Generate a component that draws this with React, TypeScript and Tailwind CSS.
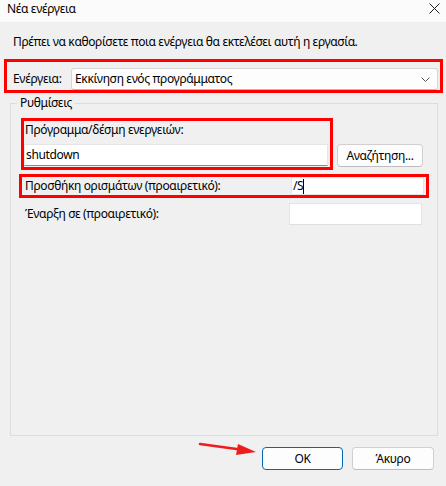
import React from "react";

const font = { fontFamily: '"Noto Sans", "Liberation Sans", sans-serif' };

function TextBox({ value, cursor, className }: { value?: string; cursor?: boolean; className?: string }) {
  return (
    <div
      className={
        "flex items-center bg-white border border-[#e5e5e5] border-b-[#8a8a8a] pl-[1px] text-[12px] leading-[16px] text-black " +
        (className ?? "")
      }
    >
      {value}
      {cursor && <span className="inline-block w-px h-[15px] bg-black" />}
    </div>
  );
}

export default function App() {
  return (
    <div className="relative w-[446px] h-[486px] bg-[#f0f0f0] text-black overflow-hidden tracking-[-0.35px]" style={font}>
      {/* title bar */}
      <div className="flex items-center justify-between h-[22px] bg-[#fbfbfb] pl-[7px] pr-[6px]">
        <span className="text-[12px] leading-[16px] -mt-[4px]">Νέα ενέργεια</span>
        <svg width="11" height="11" viewBox="0 0 11 11" className="-mt-[6px]">
          <path d="M0.5 0.5 L10.5 10.5 M10.5 0.5 L0.5 10.5" stroke="#1a1a1a" strokeWidth="1" />
        </svg>
      </div>

      <p className="mt-[12px] pl-[13px] text-[12px] leading-[16px]">
        Πρέπει να καθορίσετε ποια ενέργεια θα εκτελέσει αυτή η εργασία.
      </p>

      {/* action select */}
      <div className="mt-[9px] ml-[4px] w-[439px] h-[34px] border-[3px] border-[#ff0000] flex items-end pl-[6px] pr-[2px]">
        <span className="text-[12px] leading-[16px] mb-[3px] w-[58px]">Ενέργεια:</span>
        <div className="flex-1 h-[22px] flex items-center justify-between bg-[#fdfdfd] border border-[#d6d6d6] border-b-[#b8b8b8] rounded-[3px] pl-[3px] pr-[7px]">
          <span className="text-[12px] leading-[16px]">Εκκίνηση ενός προγράμματος</span>
          <svg width="9" height="5" viewBox="0 0 9 5">
            <path d="M0.5 0.5 L4.5 4.5 L8.5 0.5" stroke="#555" strokeWidth="1" fill="none" />
          </svg>
        </div>
      </div>

      {/* settings group */}
      <fieldset className="mt-[2px] ml-[10px] w-[428px] h-[341px] border border-[#dcdcdc]">
        <legend className="ml-[6px] px-[3px] text-[12px] leading-[16px]">Ρυθμίσεις</legend>

        <div className="flex items-end mt-[7px] ml-[10px]">
          <div className="w-[312px] h-[52px] border-[3px] border-[#ff0000] flex flex-col pr-[2px] pb-[1px]">
            <span className="text-[12px] leading-[16px] mt-[1px] pl-[1px]">Πρόγραμμα/δέσμη ενεργειών:</span>
            <TextBox value="shutdown" className="mt-auto h-[22px]" />
          </div>
          <button className="ml-[4px] mb-[3px] w-[86px] h-[23px] rounded-[4px] bg-[#fdfdfd] border border-[#d0d0d0] border-b-[#bdbdbd] text-[12px] leading-[16px]">
            Αναζήτηση...
          </button>
        </div>

        <div className="mt-[4px] ml-[8px] w-[410px] h-[24px] border-[3px] border-[#ff0000] flex items-center pl-[3px] pr-[2px]">
          <span className="flex-1 text-[12px] leading-[16px]">Προσθήκη ορισμάτων (προαιρετικό):</span>
          <TextBox value="/S" cursor className="w-[133px] h-[18px] border-b-[#e5e5e5]" />
        </div>

        <div className="mt-[5px] ml-[11px] w-[402px] flex items-center pr-[2px]">
          <span className="flex-1 text-[12px] leading-[16px] pl-[3px]">Έναρξη σε (προαιρετικό):</span>
          <TextBox className="w-[133px] h-[22px] border-b-[#e0e0e0]" />
        </div>
      </fieldset>

      {/* buttons */}
      <div className="flex justify-end gap-[9px] mt-[11px] pr-[12px]">
        <button className="w-[81px] h-[23px] rounded-[4px] bg-[#fdfdfd] border border-[#0067c0] text-[12px] leading-[16px]">
          OK
        </button>
        <button className="w-[82px] h-[23px] rounded-[4px] bg-[#fdfdfd] border border-[#d0d0d0] border-b-[#bdbdbd] text-[12px] leading-[16px]">
          Άκυρο
        </button>
      </div>

      {/* annotation arrow */}
      <svg className="absolute left-[198px] top-[438px]" width="62" height="18" viewBox="0 0 62 18">
        <path d="M2 6 L46 12" stroke="#ee1c1c" strokeWidth="2.5" strokeLinecap="round" />
        <path d="M40 6 L58 14 L38 17 Z" fill="#ee1c1c" />
      </svg>
    </div>
  );
}
